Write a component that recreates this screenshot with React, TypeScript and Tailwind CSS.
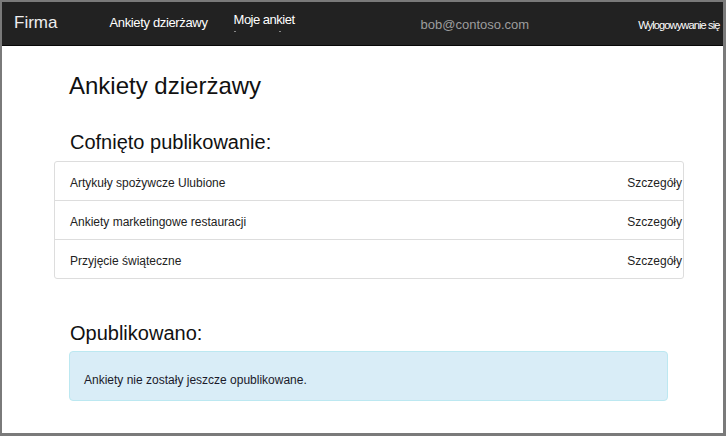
import React from "react";

const unpublished = [
  "Artykuły spożywcze Ulubione",
  "Ankiety marketingowe restauracji",
  "Przyjęcie świąteczne",
];

export default function App() {
  return (
    <div
      className="w-[726px] h-[436px] overflow-hidden bg-white border-[#7a7a7a] border-t-2 border-l-2 border-r-[3px] border-b-[3px] flex flex-col"
      style={{ fontFamily: '"Liberation Sans", Arial, sans-serif' }}
    >
      {/* Navbar */}
      <header className="h-[44px] shrink-0 bg-[#222222] border-b border-[#080808] flex items-start">
        <span className="ml-[12px] mt-[10px] text-[17px] text-[#eeeeee] leading-[22px]">Firma</span>
        <nav className="flex items-start ml-[52px]">
          <a className="mt-[13px] text-[13px] leading-[16px] tracking-[-0.35px] text-white">Ankiety dzierżawy</a>
          <a className="relative ml-[26px] mt-[10px] text-[13px] leading-[16px] tracking-[-0.5px] text-white">
            Moje ankiet
            <span className="absolute left-[0px] top-[19px] w-[2px] h-[1px] bg-[#888]" />
            <span className="absolute left-[45px] top-[19px] w-[2px] h-[1px] bg-[#888]" />
          </a>
        </nav>
        <span className="ml-[126px] mt-[15px] text-[13px] leading-[16px] text-[#9d9d9d]">bob@contoso.com</span>
        <span className="ml-[109px] mt-[16px] text-[11px] leading-[14px] tracking-[-0.85px] text-white">
          Wylogowywanie się
        </span>
      </header>

      {/* Content */}
      <main className="flex flex-col">
        <h1 className="ml-[67px] mt-[25px] text-[24px] leading-[30px] text-[#111]">Ankiety dzierżawy</h1>

        <h2 className="ml-[68px] mt-[28px] text-[20px] leading-[26px] text-[#111]">Cofnięto publikowanie:</h2>

        <div className="ml-[52px] mt-[6px] w-[630px] border border-[#dddddd] rounded-[3px]">
          {unpublished.map((name, i) => (
            <div
              key={i}
              className={`h-[38px] flex items-center justify-between pl-[15px] pr-[1px] pt-[3px] text-[12px] text-[#222] ${
                i > 0 ? "border-t border-[#dddddd] h-[39px]" : ""
              }`}
            >
              <span>{name}</span>
              <span>Szczegóły</span>
            </div>
          ))}
        </div>

        <h2 className="ml-[68px] mt-[41px] text-[20px] leading-[26px] text-[#111]">Opublikowano:</h2>

        <div className="ml-[67px] mt-[5px] w-[599px] h-[50px] bg-[#d9edf7] border border-[#bce8f1] rounded-[4px] flex items-center pl-[14px] pt-[8px]">
          <span className="text-[12px] text-[#1a1a2a]">Ankiety nie zostały jeszcze opublikowane.</span>
        </div>
      </main>
    </div>
  );
}
